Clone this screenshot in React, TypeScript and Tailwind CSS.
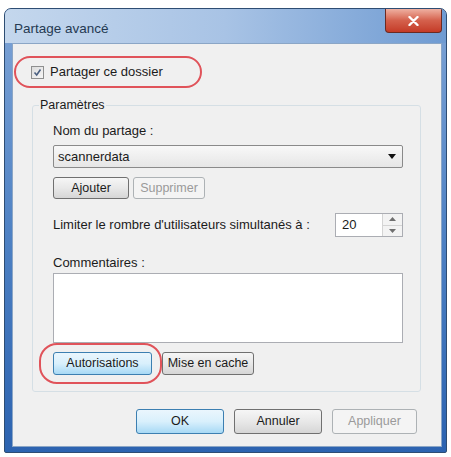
const font = "font-['Liberation_Sans',Arial,sans-serif]";

const Btn = ({ label, kind = "normal", w }: { label: string; kind?: "normal" | "default" | "disabled"; w: string }) => {
    const styles = {
        normal: "border-[#707070] bg-gradient-to-b from-[#f6f6f6] via-[#e8e8e8] to-[#d6d6d6] text-[#1b1b1b]",
        default: "border-[#3c7fb1] bg-gradient-to-b from-[#eaf6fd] via-[#d9f0fc] to-[#a7d9f5] text-[#1b1b1b]",
        disabled: "border-[#adb2b5] bg-[#f4f4f4] text-[#9a9a9a]",
    };
    return (
        <div className={`${w} h-full rounded-[3px] border flex items-center justify-center text-[12.5px] ${styles[kind]}`}>
            {label}
        </div>
    );
};

const App = () => {
    return (
        <div className={`w-[451px] h-[457px] bg-white pt-[8px] pl-[4px] ${font}`}>
            <div className="w-[443px] h-[445px] rounded-t-[7px] rounded-b-[2px] border border-[#2e4d73] bg-gradient-to-b from-[#7ea4d6] via-[#4f82c4] to-[#2c63b0] flex flex-col overflow-hidden">

                {/* title bar */}
                <div className="h-[34px] flex items-start bg-gradient-to-r from-[#c4d7ed] via-[#a8c3e5] to-[#6f9bd2]">
                    <span className="ml-[9px] mt-[10px] text-[13.5px] text-[#253a52]">Partage avancé</span>
                    <div className="ml-auto mr-[4px] w-[57px] h-[24px] rounded-b-[4px] border border-[#6b2a22] border-t-0 bg-gradient-to-b from-[#eeb0a2] via-[#d4604c] to-[#c43a26] flex items-center justify-center">
                        <svg width="11" height="10" viewBox="0 0 11 10">
                            <path d="M1.5 1 L9.5 9 M9.5 1 L1.5 9" stroke="#fff" strokeWidth="2.4" strokeLinecap="round" />
                        </svg>
                    </div>
                </div>

                {/* client area */}
                <div className="relative flex-1 ml-[7px] mr-[4px] mb-[5px] border border-[#8ba6c6] bg-[#f0f0f0] text-[13px] text-[#1b1b1b] flex flex-col">

                    <div className="flex items-center ml-[18px] mt-[21px] h-[14px]">
                        <div className="w-[13px] h-[13px] border border-[#8e8f8f] bg-gradient-to-br from-[#dcdcdc] to-[#f6f6f6] flex items-center justify-center">
                            <svg width="9" height="9" viewBox="0 0 9 9">
                                <path d="M1.5 4.5 L3.7 7 L7.5 1.5" stroke="#4a5f80" strokeWidth="1.6" fill="none" />
                            </svg>
                        </div>
                        <span className="ml-[6px]">Partager ce dossier</span>
                    </div>

                    {/* group box */}
                    <fieldset className="ml-[19px] mt-[19px] w-[389px] h-[294px] border border-[#d5dfe5] rounded-[3px] pl-[20px] pr-[17px] flex flex-col">
                        <legend className="-ml-[14px] px-[1px] leading-[14px] text-[12.5px]">Paramètres</legend>

                        <div className="mt-[12px] leading-[14px]">Nom du partage :</div>

                        <div className="mt-[7px] h-[23px] w-[350px] border border-[#8a8a8a] rounded-[2px] bg-gradient-to-b from-[#f8f8f8] to-[#e6e6e6] flex items-center pl-[4px] pr-[6px]">
                            <span>scannerdata</span>
                            <svg className="ml-auto" width="8" height="5" viewBox="0 0 8 5">
                                <path d="M0 0 H8 L4 5 Z" fill="#111" />
                            </svg>
                        </div>

                        <div className="mt-[9px] h-[22px] flex gap-[4px]">
                            <Btn label="Ajouter" w="w-[76px]" />
                            <Btn label="Supprimer" kind="disabled" w="w-[72px]" />
                        </div>

                        <div className="mt-[14px] h-[24px] flex items-center">
                            <span>Limiter le rombre d'utilisateurs simultanés à :</span>
                            <div className="ml-auto w-[68px] h-full border border-[#abadb3] bg-white flex">
                                <span className="pl-[6px] self-center text-[13px]">20</span>
                                <div className="ml-auto w-[20px] border-l border-[#d4d4d4] bg-[#f3f3f3] flex flex-col">
                                    <div className="flex-1 flex items-center justify-center border-b border-[#d4d4d4]">
                                        <svg width="7" height="4" viewBox="0 0 7 4"><path d="M0 4 H7 L3.5 0 Z" fill="#6f6f6f" /></svg>
                                    </div>
                                    <div className="flex-1 flex items-center justify-center">
                                        <svg width="7" height="4" viewBox="0 0 7 4"><path d="M0 0 H7 L3.5 4 Z" fill="#6f6f6f" /></svg>
                                    </div>
                                </div>
                            </div>
                        </div>

                        <div className="mt-[19px] leading-[14px]">Commentaires :</div>
                        <div className="mt-[3px] h-[70px] w-[350px] border border-[#abadb3] bg-white" />

                        <div className="mt-[9px] h-[23px] flex gap-[10px]">
                            <Btn label="Autorisations" kind="default" w="w-[99px]" />
                            <Btn label="Mise en cache" w="w-[92px]" />
                        </div>
                    </fieldset>

                    <div className="mt-[17px] h-[25px] flex justify-end gap-[10px] pr-[24px]">
                        <Btn label="OK" kind="default" w="w-[88px]" />
                        <Btn label="Annuler" w="w-[88px]" />
                        <Btn label="Appliquer" kind="disabled" w="w-[85px]" />
                    </div>

                    {/* red annotation ovals */}
                    <div className="absolute left-[1px] top-[12px] w-[188px] h-[32px] rounded-full border-2 border-[#e0535a]" />
                    <div className="absolute left-[26px] top-[299px] w-[123px] h-[41px] rounded-[18px] border-2 border-[#e0535a]" />
                </div>
            </div>
        </div>
    );
};

export default App;
